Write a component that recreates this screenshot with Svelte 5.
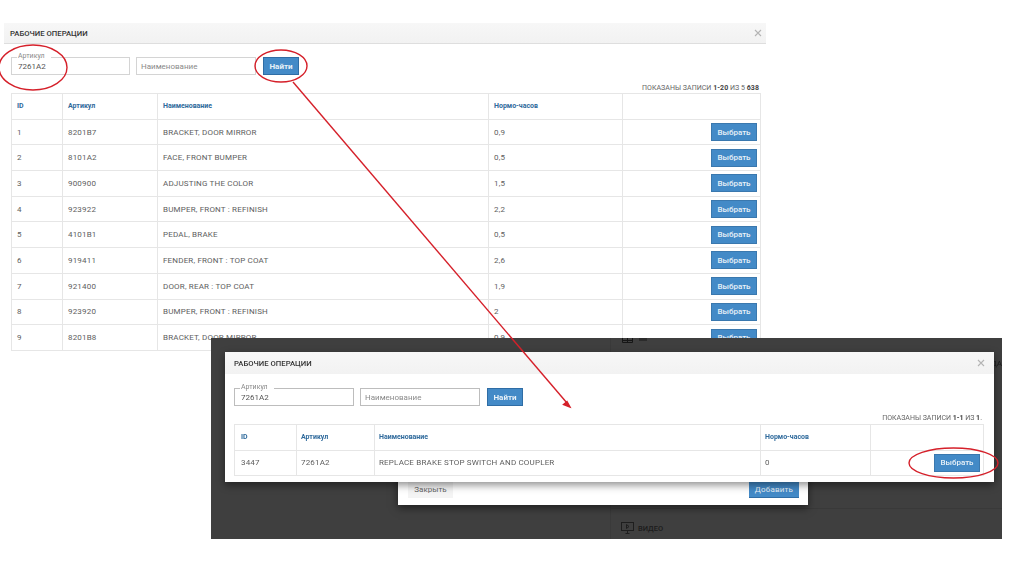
<script>
  const firstRows = [
    [1, '8201B7', 'BRACKET, DOOR MIRROR', '0,9'],
    [2, '8101A2', 'FACE, FRONT BUMPER', '0,5'],
    [3, '900900', 'ADJUSTING THE COLOR', '1,5'],
    [4, '923922', 'BUMPER, FRONT : REFINISH', '2,2'],
    [5, '4101B1', 'PEDAL, BRAKE', '0,5'],
    [6, '919411', 'FENDER, FRONT : TOP COAT', '2,6'],
    [7, '921400', 'DOOR, REAR : TOP COAT', '1,9'],
    [8, '923920', 'BUMPER, FRONT : REFINISH', '2'],
    [9, '8201B8', 'BRACKET, DOOR MIRROR', '0,9']
  ];
  const secondRows = [[3447, '7261A2', 'REPLACE BRAKE STOP SWITCH AND COUPLER', '0']];
  const heads = ['ID', 'Артикул', 'Наименование', 'Нормо-часов', ''];
</script>

{#snippet grid(rows, cols, cls)}
  <div class="table {cls}" style="grid-template-columns: {cols}">
    {#each heads as h}
      <div class="cell head">{h}</div>
    {/each}
    {#each rows as row}
      {#each row as v}
        <div class="cell">{v}</div>
      {/each}
      <div class="cell action"><button class="btn small">Выбрать</button></div>
    {/each}
  </div>
{/snippet}

{#snippet search()}
  <div class="search">
    <div class="field">
      <span class="legend">Артикул</span>
      7261A2
    </div>
    <div class="field muted">Наименование</div>
    <button class="btn find">Найти</button>
  </div>
{/snippet}

{#snippet close()}
  <svg class="close" width="8" height="8" viewBox="0 0 8 8"><path d="M1 1l6 6M7 1l-6 6" stroke="#b4b4b4" stroke-width="1.1" /></svg>
{/snippet}

<div class="page">
  <section class="modal first">
    <header><b>РАБОЧИЕ ОПЕРАЦИИ</b>{@render close()}</header>
    <div class="body">
      {@render search()}
      <p class="count">ПОКАЗАНЫ ЗАПИСИ <b>1-20</b> ИЗ 5 <b>638</b></p>
      {@render grid(firstRows, '51px 95px 331px 134px 138px', 'long')}
    </div>
  </section>

  <section class="backdrop">
    <div class="side">
      <div class="side-top">
        <svg width="11" height="5" viewBox="0 0 11 5" fill="none" stroke="#161616" stroke-width="1"><path d="M0.500 0v4.500h10V0M0.500 2.500h10M5.500 0v4.500" /></svg>
        <span class="side-dots"></span>
      </div>
      <span class="side-tab">ДА</span>
      <div class="side-video">
        <svg width="13" height="12" viewBox="0 0 13 12" fill="none" stroke="#1e1e1e" stroke-width="1">
          <rect x="0.500" y="0.500" width="12" height="8" />
          <path d="M6.500 8.500v3M4.500 11.500h4M5.500 2.500l2.500 2-2.500 2z" />
        </svg>
        ВИДЕО
      </div>
    </div>
    <div class="under">
      <div class="under-foot">
        <span class="btn plain">Закрыть</span>
        <span class="btn add">Добавить</span>
      </div>
    </div>
    <section class="modal second">
      <header><b>РАБОЧИЕ ОПЕРАЦИИ</b>{@render close()}</header>
      <div class="body">
        {@render search()}
        <p class="count">ПОКАЗАНЫ ЗАПИСИ <b>1-1</b> ИЗ <b>1</b>.</p>
        {@render grid(secondRows, '62px 78px 386px 110px 113px', 'short')}
      </div>
    </section>
  </section>

  <svg class="marks" width="1024" height="574" viewBox="0 0 1024 574" fill="none" stroke="#d5202a" stroke-width="1.4">
    <ellipse cx="33" cy="67.500" rx="34" ry="22.500" />
    <ellipse cx="281" cy="66" rx="26" ry="16" />
    <ellipse cx="953.500" cy="463" rx="44.500" ry="15" />
    <path d="M293 82L567 403" />
    <path d="M570 407l-6.500-2.500 3.500-3z" fill="#d5202a" />
  </svg>
</div>

<style>
  :global(body) {
    margin: 0;
    background: #fff;
  }

  .page {
    position: relative;
    width: 1024px;
    height: 574px;
    overflow: hidden;
    font-family: Roboto, "Liberation Sans", sans-serif;
    font-size: 8px;
    color: #5c5c5c;
    filter: blur(0.35px);
  }

  .modal {
    position: absolute;
    background: #fff;
  }

  .first {
    left: 4px;
    top: 23px;
    width: 762px;
  }

  .second {
    left: 14px;
    top: 14px;
    width: 769px;
    height: 130px;
    box-shadow: 0 3px 8px rgba(0, 0, 0, 0.45);
  }

  header {
    display: flex;
    align-items: center;
    justify-content: space-between;
    box-sizing: border-box;
    height: 21px;
    padding: 0 4px 0 6px;
    background: linear-gradient(#f7f7f7, #f2f2f2);
    border-bottom: 1px solid #dedede;
    color: #333;
    font-size: 7.700px;
  }

  .second header {
    padding: 0 9px;
    height: 22px;
    border: 0;
  }

  header b {
    font-weight: 500;
  }

  .body {
    padding: 13px 5px 0 7px;
  }

  .second .body {
    padding: 14px 10px 0 9px;
  }

  .search {
    display: flex;
    gap: 6px;
  }

  .field {
    position: relative;
    box-sizing: border-box;
    width: 120px;
    height: 18px;
    padding: 1px 0 0 6px;
    border: 1px solid #d4d4d4;
    line-height: 16px;
    color: #555;
    font-size: 8px;
  }

  .first .field:first-child {
    width: 119px;
  }

  .second .field {
    border-color: #bdbdbd;
  }

  .muted {
    padding-left: 4px;
    color: #8a8a8a;
  }

  .legend {
    position: absolute;
    left: 5px;
    top: -6px;
    padding: 0 6px 0 1px;
    line-height: 9px;
    font-size: 7px;
    color: #8a8a8a;
    background: #fff;
  }

  .btn {
    box-sizing: border-box;
    border: 0;
    border-bottom: 1px solid #2f6da5;
    background: #438ac7;
    color: #e8f1f8;
    font-family: inherit;
    padding: 0;
    text-align: center;
  }

  .find {
    width: 36px;
    height: 18px;
    margin-left: 1px;
    font-size: 8px;
    font-weight: 700;
    border: 1px solid #2f6da5;
  }

  .small {
    width: 46px;
    height: 18px;
    font-size: 8px;
    font-weight: 500;
    border: 1px solid #3a78ae;
  }

  .count {
    margin: 8px 0 0;
    padding-right: 2px;
    height: 10px;
    text-align: right;
    line-height: 10px;
    font-size: 7px;
    color: #666;
  }

  .first .count {
    letter-spacing: 0.05px;
  }

  .second .count {
    margin: 7px 0 1px;
  }

  .count b {
    color: #444;
  }

  .table {
    display: grid;
    border-top: 1px solid #e6e6e6;
    border-left: 1px solid #e6e6e6;
    box-sizing: border-box;
    background: #fff;
  }

  .cell {
    display: flex;
    align-items: center;
    padding-left: 5px;
    height: 25.700px;
    box-sizing: border-box;
    border-right: 1px solid #e6e6e6;
    border-bottom: 1px solid #e6e6e6;
    font-size: 8px;
    letter-spacing: 0.18px;
    color: #5e5e5e;
  }

  .head {
    font-weight: 700;
    font-size: 7px;
    letter-spacing: 0;
    color: #2f6a9c;
  }

  .action {
    justify-content: flex-end;
    padding-right: 3px;
  }

  .short .cell {
    height: 25.500px;
    padding-left: 4px;
  }

  .short .cell:nth-child(5n + 1) {
    padding-left: 6px;
  }

  .backdrop {
    position: absolute;
    left: 211px;
    top: 338px;
    width: 791px;
    height: 201px;
    background: #3f3f3f;
    overflow: hidden;
  }

  .side {
    position: absolute;
    left: 399px;
    top: 0;
    right: 0;
    bottom: 0;
    border-left: 1px solid #3a3a3a;
  }

  .side-top {
    display: flex;
    align-items: flex-start;
    gap: 6px;
    padding-left: 11px;
  }

  .side-dots {
    width: 8px;
    height: 3px;
    background: #2b2b2b;
  }

  .side-tab {
    position: absolute;
    right: 0;
    top: 21px;
    line-height: 10px;
    font-size: 8px;
    color: #1c1c1c;
  }

  .side-video {
    display: flex;
    align-items: center;
    gap: 4px;
    position: absolute;
    left: 0;
    right: 0;
    top: 170px;
    bottom: 0;
    padding: 8px 0 0 10px;
    border-top: 1px solid #393939;
    color: #1c1c1c;
    font-size: 7.500px;
    font-weight: 500;
  }

  .under {
    position: absolute;
    left: 187px;
    top: 100px;
    width: 410px;
    height: 67px;
    background: #fff;
    box-shadow: 0 3px 8px rgba(0, 0, 0, 0.5);
  }

  .under-foot {
    display: flex;
    justify-content: space-between;
    align-items: flex-end;
    height: 60px;
    padding: 0 9px 0 10px;
  }

  .plain {
    width: 45px;
    height: 16px;
    line-height: 16px;
    background: #f4f4f4;
    border: 0;
    color: #666;
    font-size: 8px;
  }

  .add {
    width: 50px;
    height: 16px;
    line-height: 16px;
    font-size: 8px;
    letter-spacing: 0.2px;
  }

  .marks {
    position: absolute;
    left: 0;
    top: 0;
    pointer-events: none;
  }
</style>
